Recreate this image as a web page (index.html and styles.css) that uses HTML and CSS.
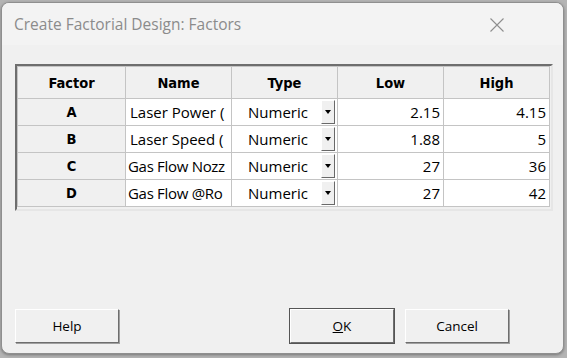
FILE: index.html
```html
<!DOCTYPE html>
<html>

<head>
    <title>Create Factorial Design: Factors</title>
    <link rel="stylesheet" href="styles.css">
</head>

<body>
    <div class="ventana">
        <div class="titulo">
            <span>Create Factorial Design: Factors</span>
            <svg class="cerrar" width="16" height="16" viewBox="0 0 16 16">
                <path d="M1.5 1.5 L14.5 14.5 M14.5 1.5 L1.5 14.5" stroke="#8e8e8e" stroke-width="1.1" fill="none" />
            </svg>
        </div>

        <div class="cuerpo">
            <div class="marco">
                <div class="tabla">
                    <div class="cab">Factor</div>
                    <div class="cab">Name</div>
                    <div class="cab">Type</div>
                    <div class="cab">Low</div>
                    <div class="cab">High</div>

                    <div class="letra">A</div>
                    <div class="nombre">Laser Power (</div>
                    <div class="tipo"><span>Numeric</span><div class="flecha"></div></div>
                    <div class="num">2.15</div>
                    <div class="num">4.15</div>

                    <div class="letra">B</div>
                    <div class="nombre">Laser Speed (</div>
                    <div class="tipo"><span>Numeric</span><div class="flecha"></div></div>
                    <div class="num">1.88</div>
                    <div class="num">5</div>

                    <div class="letra">C</div>
                    <div class="nombre apretado">Gas Flow Nozz</div>
                    <div class="tipo"><span>Numeric</span><div class="flecha"></div></div>
                    <div class="num">27</div>
                    <div class="num">36</div>

                    <div class="letra">D</div>
                    <div class="nombre apretado">Gas Flow @Ro</div>
                    <div class="tipo"><span>Numeric</span><div class="flecha"></div></div>
                    <div class="num">27</div>
                    <div class="num">42</div>
                </div>
            </div>

            <div class="botones">
                <div class="boton">Help</div>
                <div class="derecha">
                    <div class="boton defecto"><u>O</u>K</div>
                    <div class="boton">Cancel</div>
                </div>
            </div>
        </div>
    </div>
</body>

</html>
```

FILE: styles.css
```css
body {
    margin: 0;
    background-color: #b4b4b4;
    font-family: "Open Sans", "DejaVu Sans", sans-serif;
    height: 358px;
    overflow: hidden;
}

.ventana {
    margin: 2px 0 0 1px;
    width: 561px;
    height: 350px;
    border: 1px solid #8f8f8f;
    border-radius: 8px;
    background-color: #f0f0f0;
    overflow: hidden;
    display: flex;
    flex-direction: column;
    box-shadow: 0 1px 3px rgba(0, 0, 0, 0.35);
}

.titulo {
    height: 42px;
    background-color: #f3f3f3;
    display: flex;
    align-items: center;
    justify-content: space-between;
    padding: 0 58px 0 12px;
    font-size: 15.5px;
    color: #8b8b8b;
}

.cerrar {
    margin-top: 2px;
}

.cuerpo {
    flex: 1;
    display: flex;
    flex-direction: column;
    justify-content: space-between;
    padding: 19px 0 10px 13px;
}

.marco {
    width: 534px;
    border: 2px solid;
    border-color: #6e6e6e #e6e6e6 #e6e6e6 #6e6e6e;
    padding-bottom: 2px;
    background-color: #f0f0f0;
}

.tabla {
    display: grid;
    grid-template-columns: 107px repeat(4, 105px);
    grid-template-rows: 31px repeat(4, 26px);
    gap: 1px;
    width: 531px;
    border: 1px solid #c4c4c4;
    background-color: #c4c4c4;
    font-size: 15px;
    color: #000;
}

.tabla>div {
    display: flex;
    align-items: center;
    overflow: hidden;
    white-space: nowrap;
}

.cab,
.letra {
    background-color: #f0f0f0;
    justify-content: center;
    font-family: "DejaVu Sans Condensed", "DejaVu Sans", sans-serif;
    font-weight: bold;
    font-size: 14.5px;
}

.nombre {
    background-color: #fff;
    padding-left: 4px;
}

.apretado {
    padding-left: 2px;
    letter-spacing: -0.3px;
}

.tipo {
    background-color: #fff;
    justify-content: space-between;
    padding-left: 16px;
}

.flecha {
    flex: none;
    width: 12px;
    height: 22px;
    margin-right: 2px;
    background-color: #f0f0f0;
    border: 1px solid;
    border-color: #fff #696969 #696969 #fff;
    display: flex;
    align-items: center;
    justify-content: center;
}

.flecha::after {
    content: "";
    border-left: 3.5px solid transparent;
    border-right: 3.5px solid transparent;
    border-top: 4px solid #000;
}

.num {
    background-color: #fff;
    justify-content: flex-end;
    padding-right: 3px;
}

.botones {
    display: flex;
    justify-content: space-between;
    width: 494px;
}

.derecha {
    display: flex;
    gap: 11px;
}

.boton {
    width: 102px;
    height: 32px;
    background-color: #f0f0f0;
    border: 1px solid;
    border-color: #fff #6e6e6e #6e6e6e #fff;
    box-shadow: 1px 1px 0 #a0a0a0;
    display: flex;
    align-items: center;
    justify-content: center;
    font-size: 13.5px;
    color: #000;
}

.defecto {
    outline: 1px solid #555;
}
```
